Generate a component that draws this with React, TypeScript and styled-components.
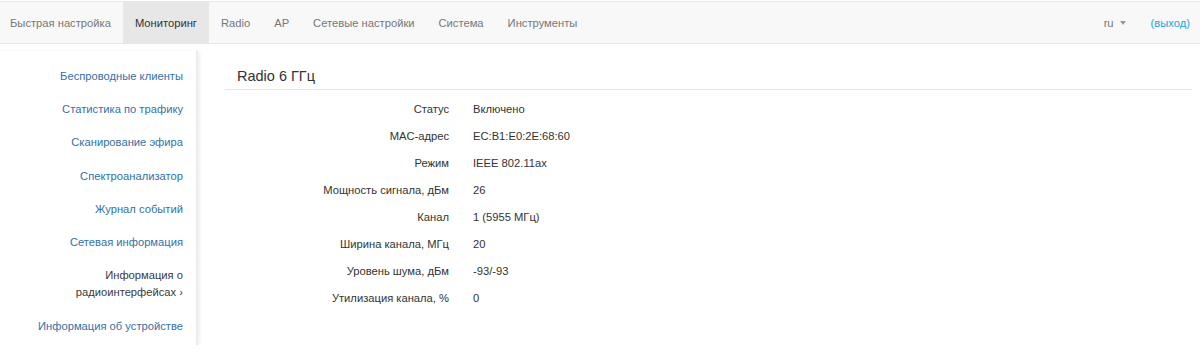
import React from 'react';
import styled, { createGlobalStyle } from 'styled-components';

const GlobalStyle = createGlobalStyle`
  html, body {
    margin: 0;
    padding: 0;
    background: #fff;
  }
  body {
    font-family: "Liberation Sans", Arial, sans-serif;
    font-size: 11.2px;
    color: #333;
  }
`;

const NAVBAR = styled.div`
  display: flex;
  align-items: stretch;
  height: 41px;
  margin-top: 1px;
  background: #f8f8f8;
  border-top: 1px solid #e7e7e7;
  border-bottom: 1px solid #e7e7e7;
  padding: 0 10px 0 0;
`;

const NAVLIST = styled.div`
  display: flex;
  margin-left: -2px;
`;

const NAVITEM = styled.a<{ $active?: boolean }>`
  display: flex;
  align-items: center;
  padding: 0 12px;
  color: ${(p) => (p.$active ? '#333' : '#777')};
  background: ${(p) => (p.$active ? '#e7e7e7' : 'transparent')};
  text-decoration: none;
  white-space: nowrap;
`;

const NAVRIGHT = styled.div`
  display: flex;
  align-items: center;
  margin-left: auto;
`;

const LANG = styled.span`
  display: flex;
  align-items: center;
  color: #777;
  margin-right: 25px;
`;

const CARET = styled.span`
  display: inline-block;
  width: 0;
  height: 0;
  margin-left: 6px;
  border-top: 4px solid #999;
  border-left: 3px solid transparent;
  border-right: 3px solid transparent;
`;

const LOGOUT = styled.a`
  color: #23a3d8;
  text-decoration: none;
`;

const BODY = styled.div`
  display: flex;
  align-items: flex-start;
  padding-top: 7px;
`;

const SIDEBAR = styled.div`
  width: 196px;
  flex-shrink: 0;
  padding: 9px 0 2px;
  border-right: 2px solid #ececec;
  box-shadow: 2px 0 3px rgba(0, 0, 0, 0.06);
`;

const SIDELINK = styled.a<{ $active?: boolean }>`
  display: block;
  text-align: right;
  padding: 8px 13px 8px 10px;
  line-height: 17.2px;
  color: ${(p) => (p.$active ? '#3a3a3a' : '#3470a8')};
  text-decoration: none;
`;

const CONTENT = styled.div`
  flex: 1;
  margin-left: 27px;
  margin-right: 8px;
`;

const HEADING = styled.h2`
  margin: 16px 0 0;
  padding: 0 0 4px 12px;
  font-size: 14.5px;
  font-weight: normal;
  line-height: 18px;
  border-bottom: 1px solid #e5e5e5;
`;

const TABLE = styled.div`
  display: grid;
  grid-template-columns: 224px auto;
  column-gap: 24px;
  justify-content: start;
  padding-top: 6px;
`;

const LABEL = styled.div`
  text-align: right;
  line-height: 27px;
`;

const VALUE = styled.div`
  line-height: 27px;
`;

const navItems = [
  'Быстрая настройка',
  'Мониторинг',
  'Radio',
  'AP',
  'Сетевые настройки',
  'Система',
  'Инструменты',
];

const sideItems = [
  'Беспроводные клиенты',
  'Статистика по трафику',
  'Сканирование эфира',
  'Спектроанализатор',
  'Журнал событий',
  'Сетевая информация',
];

const rows = [
  ['Статус', 'Включено'],
  ['MAC-адрес', 'EC:B1:E0:2E:68:60'],
  ['Режим', 'IEEE 802.11ax'],
  ['Мощность сигнала, дБм', '26'],
  ['Канал', '1 (5955 МГц)'],
  ['Ширина канала, МГц', '20'],
  ['Уровень шума, дБм', '-93/-93'],
  ['Утилизация канала, %', '0'],
];

function App() {
  return (
    <>
      <GlobalStyle />
      <NAVBAR>
        <NAVLIST>
          {navItems.map((item) => (
            <NAVITEM key={item} $active={item === 'Мониторинг'}>
              {item}
            </NAVITEM>
          ))}
        </NAVLIST>
        <NAVRIGHT>
          <LANG>
            ru
            <CARET />
          </LANG>
          <LOGOUT>(выход)</LOGOUT>
        </NAVRIGHT>
      </NAVBAR>
      <BODY>
        <SIDEBAR>
          {sideItems.map((item) => (
            <SIDELINK key={item}>{item}</SIDELINK>
          ))}
          <SIDELINK $active>
            Информация о
            <br />
            радиоинтерфейсах ›
          </SIDELINK>
          <SIDELINK>Информация об устройстве</SIDELINK>
        </SIDEBAR>
        <CONTENT>
          <HEADING>Radio 6 ГГц</HEADING>
          <TABLE>
            {rows.map(([label, value]) => (
              <React.Fragment key={label}>
                <LABEL>{label}</LABEL>
                <VALUE>{value}</VALUE>
              </React.Fragment>
            ))}
          </TABLE>
        </CONTENT>
      </BODY>
    </>
  );
}

export default App;
